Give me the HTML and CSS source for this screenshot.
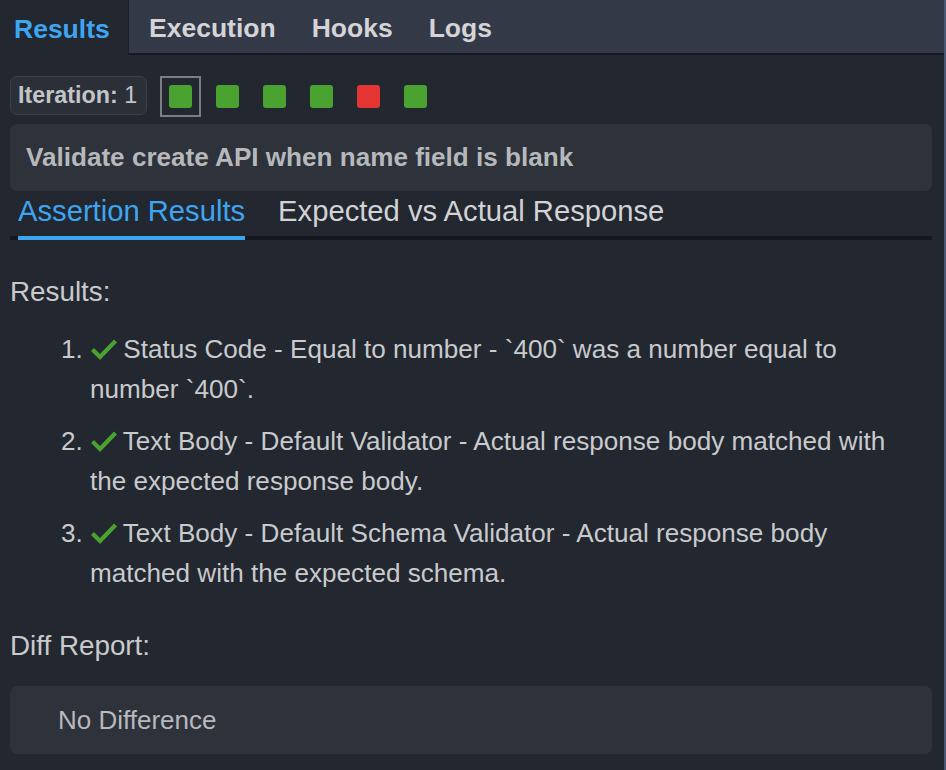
FILE: index.html
```html
<!DOCTYPE html>
<html>
<head>
<meta charset="utf-8">
<link rel="stylesheet" href="styles.css">
</head>
<body>
<div class="panel">
  <div class="tabs">
    <div class="tab active">Results</div>
    <div class="tab-rest">
      <div class="tab">Execution</div>
      <div class="tab">Hooks</div>
      <div class="tab">Logs</div>
    </div>
  </div>
  <div class="content">
    <div class="iter-row">
      <div class="iter-badge"><b>Iteration:</b> 1</div>
      <div class="sq-box selected"><span class="sq pass"></span></div>
      <div class="sq-box"><span class="sq pass"></span></div>
      <div class="sq-box"><span class="sq pass"></span></div>
      <div class="sq-box"><span class="sq pass"></span></div>
      <div class="sq-box"><span class="sq fail"></span></div>
      <div class="sq-box"><span class="sq pass"></span></div>
    </div>
    <div class="title-box">Validate create API when name field is blank</div>
    <div class="subtabs">
      <div class="subtab active">Assertion Results</div>
      <div class="subtab">Expected vs Actual Response</div>
    </div>
    <div class="section-label results-label">Results:</div>
    <ol class="assertions">
      <li><svg class="check" viewBox="0 0 28 22" width="28" height="22"><polyline points="2.5,11.5 10,19 25.5,3" fill="none" stroke="#4aa331" stroke-width="4.2"/></svg> Status Code - Equal to number - `400` was a number equal to number `400`.</li>
      <li><svg class="check" viewBox="0 0 28 22" width="28" height="22"><polyline points="2.5,11.5 10,19 25.5,3" fill="none" stroke="#4aa331" stroke-width="4.2"/></svg> Text Body - Default Validator - Actual response body matched with the expected response body.</li>
      <li><svg class="check" viewBox="0 0 28 22" width="28" height="22"><polyline points="2.5,11.5 10,19 25.5,3" fill="none" stroke="#4aa331" stroke-width="4.2"/></svg> Text Body - Default Schema Validator - Actual response body matched with the expected schema.</li>
    </ol>
    <div class="section-label diff-label">Diff Report:</div>
    <div class="diff-box">No Difference</div>
  </div>
</div>
</body>
</html>
```
FILE: styles.css
```css
html, body {
  margin: 0;
  padding: 0;
  background: #222730;
  height: 100%;
}
body {
  font-family: "Liberation Sans", Arial, sans-serif;
  color: #c9cacc;
  overflow: hidden;
}
.panel {
  width: 944px;
  height: 770px;
  border-right: 2px solid #4b5873;
  background: #222730;
}
.tabs {
  display: flex;
  height: 55px;
}
.tab {
  font-weight: bold;
  font-size: 26.5px;
  color: #d4d4d6;
  padding: 0 18px;
  line-height: 55px;
}
.tab.active {
  color: #3ea5f0;
  background: #222730;
  width: 128px;
  box-sizing: border-box;
  padding: 3px 0 0 14px;
  line-height: 52px;
  height: 55px;
}
.tab-rest {
  flex: 1;
  display: flex;
  background: #333947;
  border-bottom: 2px solid #161a20;
  border-left: 1px solid #1c2027;
  height: 53px;
}
.tab-rest .tab {
  line-height: 51px;
  padding: 3px 18px 0;
}
.tab-rest .tab:first-child {
  padding-left: 20px;
}
.content {
  padding: 0 12px 0 10px;
}
.iter-row {
  display: flex;
  align-items: center;
  margin-top: 21px;
  height: 41px;
}
.iter-badge {
  height: 39px;
  box-sizing: border-box;
  width: 137px;
  border: 1px solid #3a3f4a;
  border-radius: 7px;
  background: #2b3038;
  font-size: 23.3px;
  color: #c3c5c9;
  line-height: 37px;
  padding-left: 7px;
  margin-right: 13px;
  align-self: flex-start;
}
.iter-badge b {
  font-weight: bold;
}
.sq-box {
  width: 41px;
  height: 41px;
  box-sizing: border-box;
  border: 2px solid transparent;
  display: flex;
  align-items: center;
  justify-content: center;
  margin-right: 6px;
}
.sq-box.selected {
  border-color: #7b7e83;
}
.sq {
  width: 23px;
  height: 23px;
  border-radius: 3px;
  display: block;
}
.sq.pass { background: #4aa331; }
.sq.fail { background: #e53532; }
.title-box {
  margin-top: 7px;
  height: 67px;
  background: #2d323b;
  border-radius: 7px;
  font-weight: bold;
  font-size: 26.1px;
  color: #b6b8bc;
  line-height: 67px;
  padding-left: 16px;
}
.subtabs {
  display: flex;
  border-bottom: 4px solid #14181e;
}
.subtab {
  font-size: 29.2px;
  line-height: 34px;
  padding: 3px 0 8px;
  margin-bottom: -4px;
  border-bottom: 4px solid transparent;
  color: #d3d3d5;
  margin-left: 33px;
}
.subtab.active {
  color: #3ea5f0;
  border-bottom-color: #3ea5f0;
  margin-left: 8px;
}
.section-label {
  font-size: 27.8px;
  line-height: 32px;
  color: #c9cacc;
}
.results-label {
  margin-top: 36px;
}
.assertions {
  margin: 21px 0 0;
  padding: 0 12px 0 80px;
  font-size: 26.1px;
  line-height: 40px;
  color: #c9cacc;
}
.assertions li {
  margin-bottom: 12px;
}
.assertions li:last-child {
  margin-bottom: 0;
}
.check {
  vertical-align: -2px;
  margin-right: -2px;
}
.diff-label {
  margin-top: 37px;
}
.diff-box {
  margin-top: 24px;
  height: 68px;
  background: #2d323b;
  border-radius: 7px;
  font-size: 26px;
  line-height: 68px;
  padding-left: 48px;
  color: #b8b9bc;
}
```
